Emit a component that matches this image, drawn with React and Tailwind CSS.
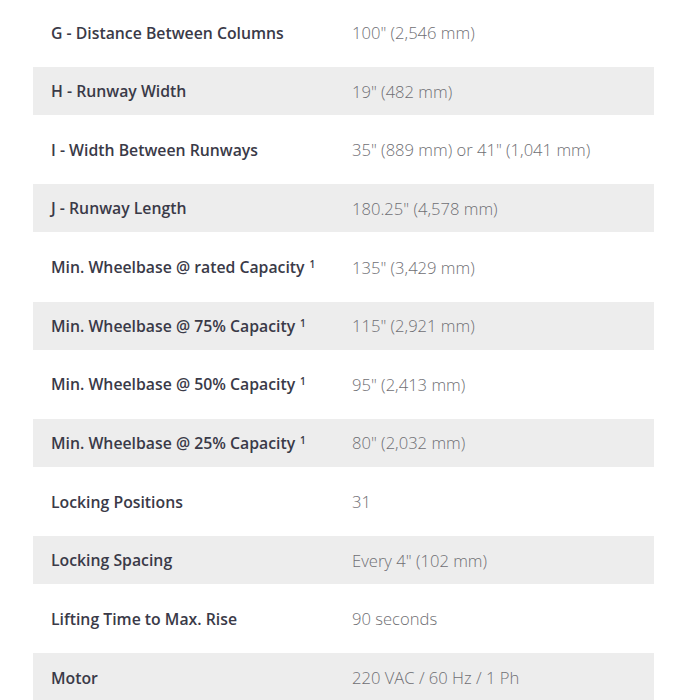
import React from "react";

const specs = [
  ["G - Distance Between Columns", "100\" (2,546 mm)"],
  ["H - Runway Width", "19\" (482 mm)"],
  ["I - Width Between Runways", "35\" (889 mm) or 41\" (1,041 mm)"],
  ["J - Runway Length", "180.25\" (4,578 mm)"],
  ["Min. Wheelbase @ rated Capacity", "135\" (3,429 mm)", true],
  ["Min. Wheelbase @ 75% Capacity", "115\" (2,921 mm)", true],
  ["Min. Wheelbase @ 50% Capacity", "95\" (2,413 mm)", true],
  ["Min. Wheelbase @ 25% Capacity", "80\" (2,032 mm)", true],
  ["Locking Positions", "31"],
  ["Locking Spacing", "Every 4\" (102 mm)"],
  ["Lifting Time to Max. Rise", "90 seconds"],
  ["Motor", "220 VAC / 60 Hz / 1 Ph"],
];

const App = () => {
  return (
    <div className="w-[700px] h-[700px] overflow-hidden bg-white font-['Open_Sans',sans-serif]">
      <div className="flex flex-col gap-[10.65px] pt-[8.4px] pl-[33px] w-[654px]">
        {specs.map(([label, value, note], i) => (
          <div
            key={label}
            className={
              "flex items-center h-[48px] pt-[2px] shrink-0 " +
              (i % 2 === 1 ? "bg-[#ededed]" : "bg-white")
            }
          >
            <div className="w-[319px] pl-[18px] text-[15.8px] font-semibold text-[#3a3a48] whitespace-nowrap">
              {label}
              {note && <sup className="ml-[5px] text-[10px] font-semibold">1</sup>}
            </div>
            <div className="text-[16.6px] font-light text-[#6f6f74] whitespace-nowrap">
              {value}
            </div>
          </div>
        ))}
      </div>
    </div>
  );
};

export default App;
